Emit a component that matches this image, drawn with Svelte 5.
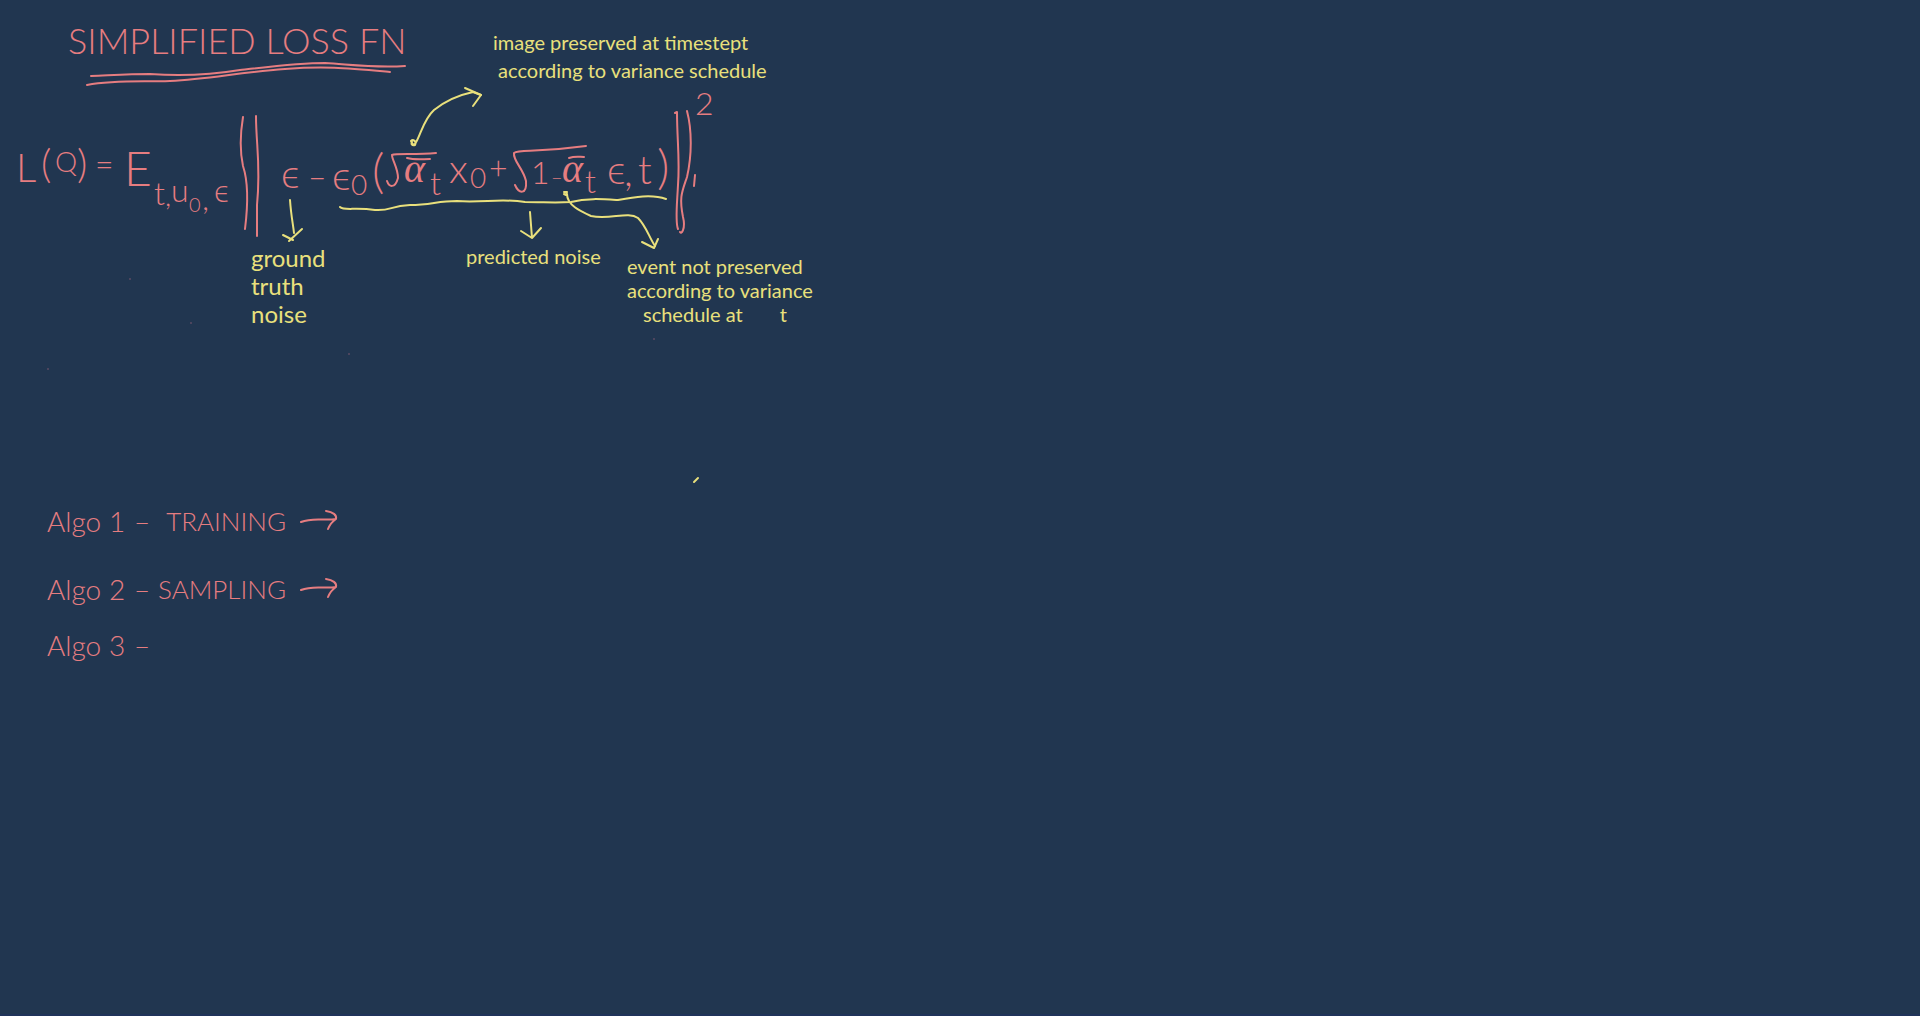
<script>
  const algorithms = [
    { id: 1, name: 'TRAINING', arrow: true },
    { id: 2, name: 'SAMPLING', arrow: true },
    { id: 3, name: '', arrow: false }
  ];

  // Symbols of the formula: x and baseline on the board, plus a size class.
  const symbols = [
    { t: 'L', x: 16, y: 182, s: 'xl' },
    { t: '(', x: 41, y: 178, s: 'xl' },
    { t: 'Q', x: 55, y: 172, s: 'md' },
    { t: ')', x: 77, y: 178, s: 'xl' },
    { t: '=', x: 95, y: 176, s: 'lg' },
    { t: 'E', x: 124, y: 186, s: 'xxl' },
    { t: 't', x: 154, y: 205, s: 'lg' },
    { t: ',', x: 165, y: 206, s: 'md' },
    { t: 'u', x: 171, y: 202, s: 'lg' },
    { t: '0', x: 189, y: 212, s: 'sm' },
    { t: ',', x: 202, y: 210, s: 'lg' },
    { t: 'ϵ', x: 214, y: 202, s: 'lg' },
    { t: 'ϵ', x: 281, y: 188, s: 'xl' },
    { t: '–', x: 308, y: 188, s: 'lg' },
    { t: 'ϵ', x: 332, y: 190, s: 'xl' },
    { t: '0', x: 351, y: 195, s: 'md' },
    { t: '(', x: 372, y: 188, s: 'xxl' },
    { t: 'α', x: 404, y: 182, s: 'xl greek' },
    { t: 't', x: 430, y: 195, s: 'lg' },
    { t: 'x', x: 449, y: 183, s: 'xl' },
    { t: '0', x: 470, y: 188, s: 'md' },
    { t: '+', x: 489, y: 179, s: 'lg' },
    { t: '1', x: 531, y: 184, s: 'lg' },
    { t: '–', x: 551, y: 184, s: 'sm' },
    { t: 'α', x: 562, y: 182, s: 'xl greek' },
    { t: 't', x: 585, y: 193, s: 'lg' },
    { t: 'ϵ', x: 607, y: 184, s: 'xl' },
    { t: ',', x: 624, y: 186, s: 'xl' },
    { t: 't', x: 638, y: 184, s: 'xl' },
    { t: ')', x: 657, y: 184, s: 'xxl' },
    { t: '2', x: 695, y: 115, s: 'lg' }
  ];

  const pinkStrokes = [
    // double underline of the title
    'M91 76C115 75 130 74 150 74C180 76 210 75 240 70C275 66 300 63 325 63C355 65 375 68 405 66',
    'M87 85C115 80 140 82 170 81C210 79 240 72 285 69C325 66 345 68 390 72',
    // left norm bars
    'M243 117C240 135 240 152 243 166C249 184 248 205 245 229',
    'M256 116C256 145 261 165 257 205L257 236',
    // right norm bars, joined at the foot
    'M675 113L677 112C677 140 680 160 678 185C677 205 675 222 678 229',
    'M687 111C692 130 692 155 687 177C682 192 679 197 683 217C686 229 681 235 680 232',
    // radicals and overbars
    'M387 181C389 187 395 189 398 178C398 168 392 160 392 155C396 153 415 155 436 153',
    'M407 158C415 160 422 159 430 159',
    'M515 185C519 194 527 195 526 181C523 168 513 161 514 153C519 149 535 153 586 146',
    'M569 158C575 156 579 157 584 157',
    'M695 175L694 186'
  ];

  const yellowStrokes = [
    // brace line under the predicted term
    'M340 207C344 211 355 207 375 210C392 211 389 206 410 205C431 205 437 201 457 201C482 203 502 198 525 202C545 202 554 203 571 202C587 198 601 199 618 200C634 197 652 194 666 199',
    // to the image note
    'M412 142C411 144 412 146 415 145C417 141 413 139 411 141L413 145L415 144C421 135 423 120 434 110C444 102 459 95 473 92L481 95',
    'M465 88L481 95L473 106',
    // to the ground truth note
    'M290 200C291 215 293 224 294 233',
    'M283 235L293 240M302 229L289 241',
    // to the predicted noise note
    'M530 212L532 238M521 231L532 238L541 228',
    // to the variance note
    'M564 192L567 192L566 195L564 194M567 194C567 205 580 211 591 216C610 220 628 211 638 218C646 226 649 237 655 246',
    'M642 242L654 248L658 239',
    'M694 482L698 478'
  ];

  const specks = [
    { x: 349, y: 354 },
    { x: 654, y: 339 },
    { x: 130, y: 279 },
    { x: 191, y: 323 },
    { x: 48, y: 369 }
  ];
</script>

<main class="board">
  <svg class="ink" role="img" aria-label="Simplified loss formula with annotations">
    {#each pinkStrokes as d}
      <path class="pink" {d} />
    {/each}
    {#each yellowStrokes as d}
      <path class="yellow" {d} />
    {/each}
    {#each specks as p}
      <circle class="speck" cx={p.x} cy={p.y} r="1" />
    {/each}
    {#each symbols as m}
      <text class={m.s} x={m.x} y={m.y}>{m.t}</text>
    {/each}
  </svg>

  <h1>SIMPLIFIED LOSS FN</h1>

  <p class="note image">image preserved at timestept<br />&nbsp;according to variance schedule</p>
  <p class="note truth">ground<br />truth<br />noise</p>
  <p class="note predicted">predicted noise</p>
  <p class="note event">
    event not preserved<br />according to variance<br />
    <span class="last">schedule at <span class="step">t</span></span>
  </p>

  <ul class="algorithms">
    {#each algorithms as a}
      <li>
        <span>Algo</span>
        <span>{a.id}</span>
        <span>–</span>
        <span class="name">{a.name}</span>
        {#if a.arrow}
          <svg class="arrow" width="40" height="24" aria-hidden="true">
            <path class="pink" d="M2 13C14 8 25 12 37 10M27 2C34 3 38 6 37 10C34 12 31 15 29 20" />
          </svg>
        {/if}
      </li>
    {/each}
  </ul>
</main>

<style>
  :global(body) {
    margin: 0;
    background: #213650;
  }

  .board {
    position: relative;
    box-sizing: border-box;
    min-height: 100vh;
    padding: 16px 0 0 47px;
    border-bottom: 2px solid #20335a;
    color: #e67d80;
    font-family: 'Lato', sans-serif;
    font-weight: 300;
  }

  .ink {
    position: absolute;
    inset: 0;
    width: 100%;
    height: 100%;
  }

  path {
    fill: none;
    stroke-width: 2;
    stroke-linecap: round;
    stroke-linejoin: round;
  }

  .pink { stroke: #e67d80; }
  .yellow { stroke: #e9e07c; }
  .speck { fill: #5b4b63; }

  text {
    fill: #e67d80;
    font-family: 'Lato', 'Open Sans', sans-serif;
  }

  .sm { font-size: 20px; }
  .md { font-size: 28px; }
  .lg { font-size: 32px; }
  .xl { font-size: 40px; }
  .xxl { font-size: 48px; }

  .greek {
    font-family: 'Liberation Serif', serif;
    font-style: italic;
  }

  h1 {
    margin: 0 0 0 21px;
    font-size: 36px;
    line-height: 48px;
    font-weight: 300;
  }

  .note {
    position: absolute;
    margin: 0;
    color: #e9e07c;
    font-size: 20px;
    font-weight: 400;
    line-height: 24px;
    white-space: nowrap;
  }

  .image {
    left: 493px;
    top: 28px;
    line-height: 28px;
  }

  .truth {
    left: 251px;
    top: 244px;
    font-size: 24px;
    line-height: 28px;
  }

  .predicted {
    left: 466px;
    top: 244px;
  }

  .event {
    left: 627px;
    top: 254px;
  }

  .last {
    padding-left: 16px;
  }

  .step {
    padding-left: 32px;
  }

  .algorithms {
    display: grid;
    grid-template-rows: 72px 64px 48px;
    margin: 421px 0 0;
    padding: 0;
    list-style: none;
    font-size: 28px;
  }

  li {
    display: grid;
    grid-template-columns: 62px 25px 22px 130px 40px;
    align-items: center;
  }

  .name {
    font-size: 26px;
    text-align: right;
  }

  .arrow {
    margin-left: 13px;
  }
</style>
